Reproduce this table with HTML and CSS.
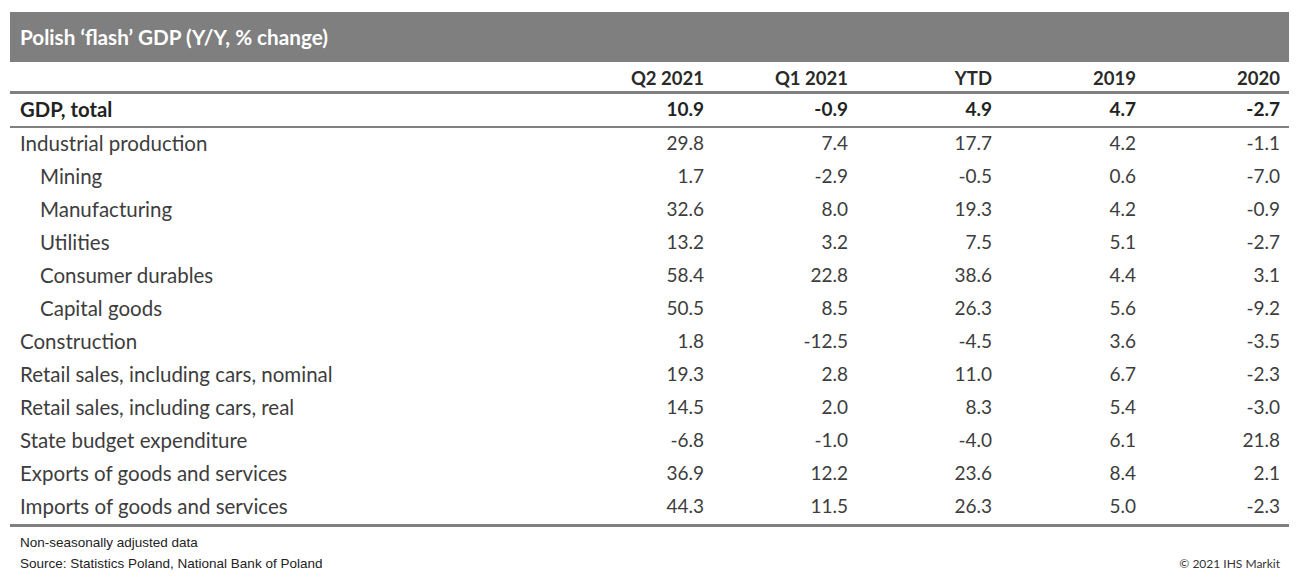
FILE: index.html
```html
<!DOCTYPE html>
<html>
<head>
<meta charset="utf-8">
<link rel="stylesheet" href="styles.css">
</head>
<body>
<div class="wrap">
  <div class="title">Polish ‘flash’ GDP (Y/Y, % change)</div>
  <div class="grid head">
    <div></div><div class="n">Q2 2021</div><div class="n">Q1 2021</div><div class="n">YTD</div><div class="n">2019</div><div class="n">2020</div>
  </div>
  <div class="grid total">
    <div class="l">GDP, total</div><div class="n">10.9</div><div class="n">-0.9</div><div class="n">4.9</div><div class="n">4.7</div><div class="n">-2.7</div>
  </div>
  <div class="body">
    <div class="grid row"><div class="l">Industrial production</div><div class="n">29.8</div><div class="n">7.4</div><div class="n">17.7</div><div class="n">4.2</div><div class="n">-1.1</div></div>
    <div class="grid row"><div class="l sub">Mining</div><div class="n">1.7</div><div class="n">-2.9</div><div class="n">-0.5</div><div class="n">0.6</div><div class="n">-7.0</div></div>
    <div class="grid row"><div class="l sub">Manufacturing</div><div class="n">32.6</div><div class="n">8.0</div><div class="n">19.3</div><div class="n">4.2</div><div class="n">-0.9</div></div>
    <div class="grid row"><div class="l sub">Utilities</div><div class="n">13.2</div><div class="n">3.2</div><div class="n">7.5</div><div class="n">5.1</div><div class="n">-2.7</div></div>
    <div class="grid row"><div class="l sub">Consumer durables</div><div class="n">58.4</div><div class="n">22.8</div><div class="n">38.6</div><div class="n">4.4</div><div class="n">3.1</div></div>
    <div class="grid row"><div class="l sub">Capital goods</div><div class="n">50.5</div><div class="n">8.5</div><div class="n">26.3</div><div class="n">5.6</div><div class="n">-9.2</div></div>
    <div class="grid row"><div class="l">Construction</div><div class="n">1.8</div><div class="n">-12.5</div><div class="n">-4.5</div><div class="n">3.6</div><div class="n">-3.5</div></div>
    <div class="grid row"><div class="l">Retail sales, including cars, nominal</div><div class="n">19.3</div><div class="n">2.8</div><div class="n">11.0</div><div class="n">6.7</div><div class="n">-2.3</div></div>
    <div class="grid row"><div class="l">Retail sales, including cars, real</div><div class="n">14.5</div><div class="n">2.0</div><div class="n">8.3</div><div class="n">5.4</div><div class="n">-3.0</div></div>
    <div class="grid row"><div class="l">State budget expenditure</div><div class="n">-6.8</div><div class="n">-1.0</div><div class="n">-4.0</div><div class="n">6.1</div><div class="n">21.8</div></div>
    <div class="grid row"><div class="l">Exports of goods and services</div><div class="n">36.9</div><div class="n">12.2</div><div class="n">23.6</div><div class="n">8.4</div><div class="n">2.1</div></div>
    <div class="grid row"><div class="l">Imports of goods and services</div><div class="n">44.3</div><div class="n">11.5</div><div class="n">26.3</div><div class="n">5.0</div><div class="n">-2.3</div></div>
  </div>
  <div class="foot">
    <div class="notes">
      <div>Non-seasonally adjusted data</div>
      <div>Source: Statistics Poland, National Bank of Poland</div>
    </div>
    <div class="copy">© 2021 IHS Markit</div>
  </div>
</div>
</body>
</html>
```
FILE: styles.css
```css
html, body { margin: 0; padding: 0; background: #fff; }
body { font-family: "Lato", "Liberation Sans", sans-serif; color: #3a3a3a; }
.wrap { width: 1279px; margin-left: 10px; padding-top: 12px; }
.title {
  height: 50px; background: #7f7f7f; color: #fff;
  font-weight: 700; font-size: 20.7px; line-height: 50px;
  padding-left: 10px; box-sizing: border-box;
}
.grid {
  display: grid;
  grid-template-columns: 550px repeat(5, 144px);
  padding-right: 9px;
  align-items: center;
}
.n { text-align: right; }
.l { padding-left: 10px; }
.l.sub { padding-left: 30px; }
.head {
  font-weight: 700; font-size: 18.5px; color: #2a2a2a;
  border-bottom: 3px solid #808080; padding-top: 3px;
  box-sizing: border-box; height: 32px;
}
.total {
  height: 34px; font-weight: 700; font-size: 19px; color: #222;
  border-bottom: 2px solid #808080; box-sizing: border-box;
  padding-bottom: 3px;
}
.total .l { font-size: 20.3px; }
.body { border-bottom: 3px solid #808080; }
.row { height: 33px; font-size: 19px; color: #3d3d3d; box-sizing: border-box; padding-bottom: 3px; }
.row .l { font-size: 20.5px; }
.row .n { padding-bottom: 1px; }
.foot {
  display: flex; justify-content: space-between; align-items: flex-end;
  font-family: "Liberation Sans", Arial, sans-serif; font-size: 13.5px; color: #222;
  padding: 5px 9px 0 10px;
}
.notes div { line-height: 21px; }
.copy { line-height: 21px; font-family: "Lato", sans-serif; font-size: 12px; color: #333; }
```
